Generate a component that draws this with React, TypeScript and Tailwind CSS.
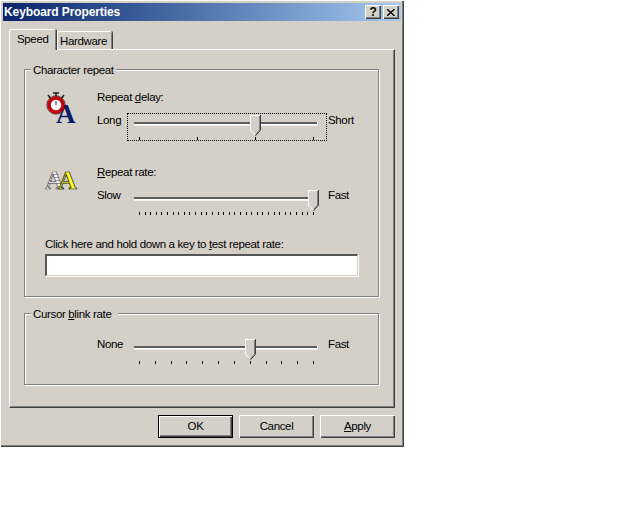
const Thumb = ({ left }: { left: number }) => (
  <svg className="absolute top-[2px]" style={{ left }} width="11" height="21" viewBox="0 0 11 21">
    <path d="M0.5 15V0.5H10" fill="#d4d0c8" stroke="#fff" />
    <path d="M1 1H9.5V15L5.5 19.5L1 15Z" fill="#d4d0c8" />
    <path d="M0.5 15L5 20" stroke="#fff" fill="none" />
    <path d="M9.5 1V15L5.5 19.5" stroke="#808080" fill="none" />
    <path d="M10.5 0V15.2L5.5 20.8" stroke="#404040" fill="none" />
  </svg>
);

interface SliderProps {
  thumbLeft: number;
  ticks: number;
  focused?: boolean;
}

const Slider = ({ thumbLeft, ticks, focused }: SliderProps) => (
  <div
    className={`relative w-[200px] h-[28px] ${focused ? "outline-1 outline-dotted -outline-offset-1 outline-black" : ""}`}
  >
    <div className="ml-[7px] mt-[9px] w-[184px] h-[3px] bg-[#5f5f5a] border-b border-white border-r shadow-[0_1px_0_#f4f3ef]" />
    <Thumb left={thumbLeft} />
    <div className="ml-[12px] mt-[12px] w-[175px] flex justify-between">
      {Array.from({ length: ticks }).map((_, i) => (
        <span key={i} className="w-px h-[3px] bg-black" />
      ))}
    </div>
  </div>
);

const SliderRow = ({ left, right, ...rest }: SliderProps & { left: string; right: string }) => (
  <div className="flex">
    <span className="w-[30px] leading-[14px]">{left}</span>
    <Slider {...rest} />
    <span className="ml-px leading-[14px]">{right}</span>
  </div>
);

const Group = ({ title, className, children }: { title: React.ReactNode; className: string; children: React.ReactNode }) => (
  <div className={`relative w-[355px] border border-[#808080] shadow-[inset_1px_1px_0_#fff,1px_1px_0_#fff] ${className}`}>
    {title}
    {children}
  </div>
);

const Button = ({ isDefault, children }: { isDefault?: boolean; children: React.ReactNode }) => (
  <button
    className={`w-[75px] h-[23px] bg-[#d4d0c8] text-center ${
      isDefault
        ? "border border-black shadow-[inset_1px_1px_0_#fff,inset_-1px_-1px_0_#404040,inset_-2px_-2px_0_#808080]"
        : "shadow-[inset_1px_1px_0_#fff,inset_-1px_-1px_0_#404040,inset_-2px_-2px_0_#808080]"
    }`}
  >
    {children}
  </button>
);

const CaptionButton = ({ children }: { children: React.ReactNode }) => (
  <div className="w-[16px] h-[14px] bg-[#d4d0c8] flex items-center justify-center font-bold text-[12px] text-black shadow-[inset_1px_1px_0_#fff,inset_-1px_-1px_0_#404040,inset_-2px_-2px_0_#808080]">
    {children}
  </div>
);

const DelayIcon = () => (
  <svg width="38" height="36" viewBox="0 0 38 36" className="mt-[2px]">
    <text x="11" y="31" fontFamily="Liberation Serif" fontWeight="bold" fontSize="27" fill="#0a1a6a">
      A
    </text>
    <path d="M8 1H14M11 1V5M3 3L6 7M19 3L16 7" stroke="#222" strokeWidth="1.5" fill="none" />
    <circle cx="11" cy="13" r="7" fill="#fff" stroke="#c00010" strokeWidth="3.5" />
    <circle cx="11" cy="13" r="9.2" fill="none" stroke="#400" strokeWidth="0.7" />
    <path d="M11 9V13" stroke="#222" />
  </svg>
);

const RateIcon = () => (
  <svg width="38" height="32" viewBox="0 0 38 32" className="mt-[6px]">
    <defs>
      <pattern id="stripes" width="2" height="3" patternUnits="userSpaceOnUse">
        <rect width="2" height="3" fill="#fff" />
        <rect width="2" height="1" fill="#8f8fa8" />
      </pattern>
    </defs>
    <text x="0" y="18" fontFamily="Liberation Serif" fontWeight="bold" fontSize="26" fill="url(#stripes)" stroke="#555" strokeWidth="0.7">
      A
    </text>
    <text x="13" y="18" fontFamily="Liberation Serif" fontWeight="bold" fontSize="26" fill="#ffff20" stroke="#111" strokeWidth="0.7">
      A
    </text>
  </svg>
);

export default function App() {
  return (
    <div className="w-[640px] h-[512px] bg-white font-['Liberation_Sans',sans-serif] text-[11.5px] tracking-[-0.35px] text-black">
      <div className="w-[404px] h-[447px] p-[3px] bg-[#d4d0c8] flex flex-col shadow-[inset_1px_1px_0_#fff,inset_-1px_-1px_0_#404040,inset_-2px_-2px_0_#808080]">
        <div className="h-[18px] shrink-0 flex items-center justify-between pl-[1px] pr-[2px] bg-gradient-to-r from-[#0a246a] to-[#a6caf0]">
          <span className="font-bold text-white text-[12px] tracking-[-0.1px]">Keyboard Properties</span>
          <div className="flex gap-[2px]">
            <CaptionButton>?</CaptionButton>
            <CaptionButton>
              <svg width="8" height="7" viewBox="0 0 8 7">
                <path d="M0 0L7.5 7M7.5 0L0 7" stroke="#000" strokeWidth="1.4" />
              </svg>
            </CaptionButton>
          </div>
        </div>

        <div className="ml-[6px] mt-[8px] flex items-end h-[20px] relative z-10">
          <div className="w-[47px] h-[21px] -mb-px bg-[#d4d0c8] border-l border-t border-white rounded-t-[2px] shadow-[inset_-1px_0_0_#808080,1px_0_0_#404040] pl-[7px] leading-[18px]">
            Speed
          </div>
          <div className="ml-px w-[55px] h-[18px] bg-[#d4d0c8] border-l border-t border-white rounded-t-[2px] shadow-[inset_-1px_0_0_#808080,1px_0_0_#404040] pl-[2px] leading-[19px]">
            Hardware
          </div>
        </div>

        <div className="ml-[6px] w-[386px] h-[359px] border-l border-t border-white border-r border-b border-r-[#404040] border-b-[#404040] shadow-[inset_-1px_-1px_0_#808080] pl-[14px] pt-[19px]">
          <Group
            title={
              <div className="absolute left-[6px] -top-[7px] pl-[2px] pr-[2px] bg-[#d4d0c8] leading-[14px]">
                Character repeat
              </div>
            }
            className="h-[228px] pt-[20px] pl-[20px]"
          >
            <div className="flex">
              <div className="w-[52px]">
                <DelayIcon />
              </div>
              <div>
                <div className="leading-[14px]">
                  Repeat <u>d</u>elay:
                </div>
                <div className="mt-[9px]">
                  <SliderRow left="Long" right="Short" thumbLeft={123} ticks={4} focused />
                </div>
              </div>
            </div>
            <div className="flex mt-[24px]">
              <div className="w-[52px]">
                <RateIcon />
              </div>
              <div>
                <div className="leading-[14px]">
                  <u>R</u>epeat rate:
                </div>
                <div className="mt-[9px]">
                  <SliderRow left="Slow" right="Fast" thumbLeft={181} ticks={32} />
                </div>
              </div>
            </div>
            <div className="mt-[21px] leading-[14px]">
              Click here and hold down a key to <u>t</u>est repeat rate:
            </div>
            <div className="mt-[3px] w-[313px] h-[22px] bg-white border-t-2 border-l-2 border-t-[#555] border-l-[#555] shadow-[1px_1px_0_#fff] border-b border-r border-[#d4d0c8]" />
          </Group>

          <Group
            title={
              <div className="absolute left-[6px] -top-[7px] pl-[2px] pr-[7px] bg-[#d4d0c8] leading-[14px]">
                Cursor <u>b</u>link rate
              </div>
            }
            className="h-[72px] mt-[16px] pt-[23px] pl-[72px]"
          >
            <SliderRow left="None" right="Fast" thumbLeft={118} ticks={12} />
          </Group>
        </div>

        <div className="flex justify-end gap-[6px] mt-[7px] pr-[6px]">
          <Button isDefault>OK</Button>
          <Button>Cancel</Button>
          <Button>
            <u>A</u>pply
          </Button>
        </div>
      </div>
    </div>
  );
}
